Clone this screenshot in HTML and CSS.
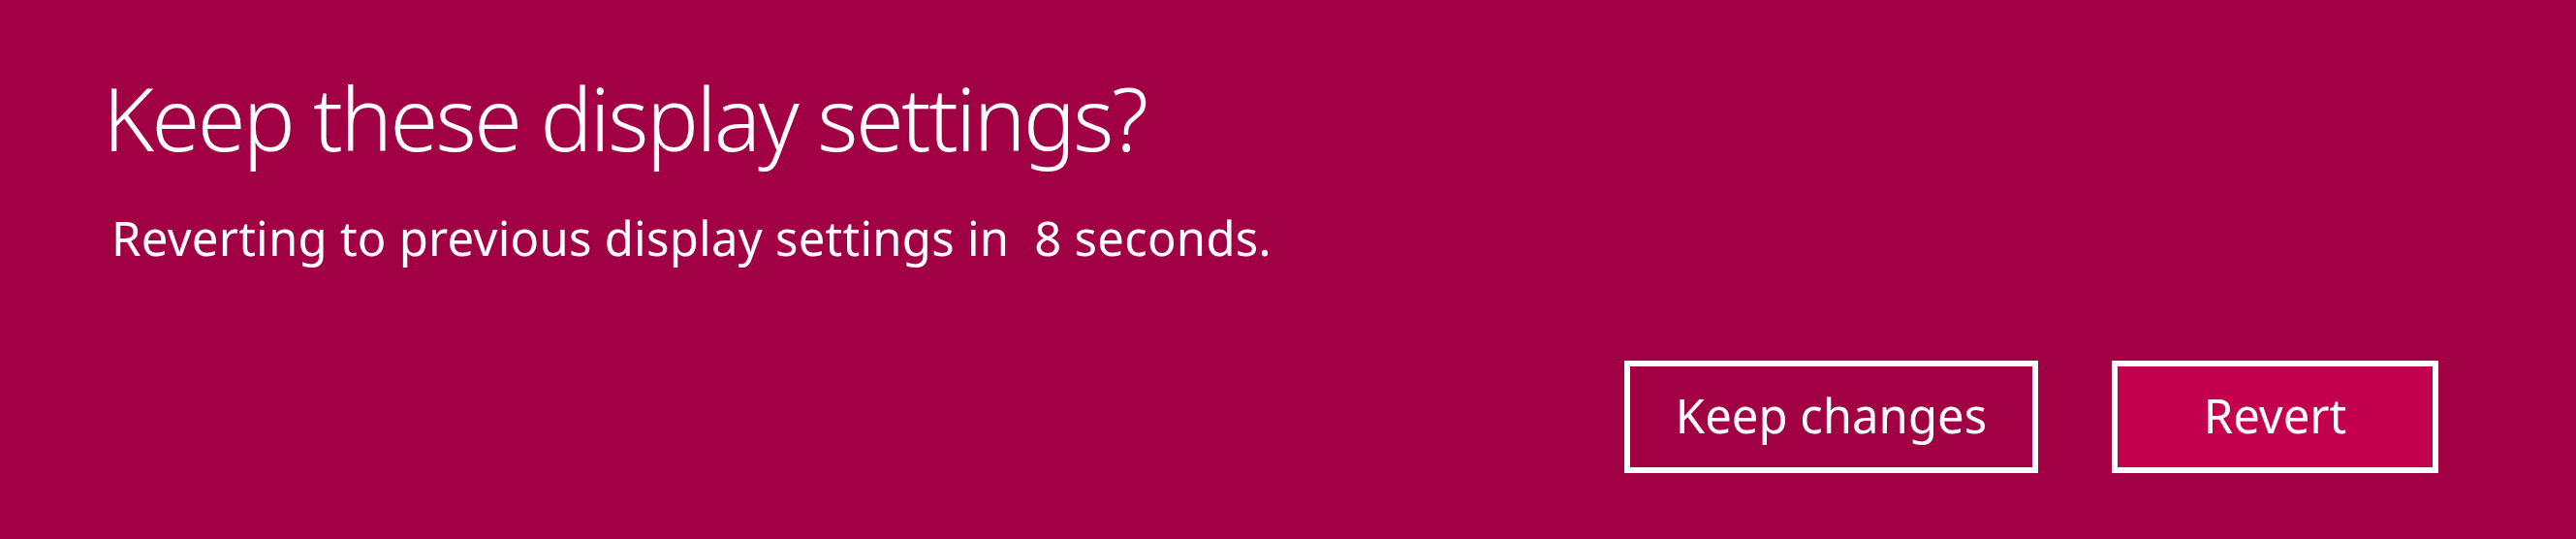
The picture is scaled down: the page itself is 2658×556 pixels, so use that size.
FILE: index.html
```html
<!DOCTYPE html>
<html lang="en">
<head>
<meta charset="utf-8">
<title>Keep these display settings?</title>
<link rel="stylesheet" href="styles.css">
</head>
<body>
<div class="dialog">
  <h1 class="title">Keep these display settings?</h1>
  <p class="message">Reverting to previous display settings in&nbsp; 8 seconds.</p>
  <div class="actions">
    <button class="btn btn-keep">Keep changes</button>
    <button class="btn btn-revert">Revert</button>
  </div>
</div>
</body>
</html>
```

FILE: styles.css
```css
html, body {
  margin: 0;
  padding: 0;
  background: #a10044;
  width: 2658px;
  height: 556px;
  overflow: hidden;
}

.dialog {
  box-sizing: border-box;
  width: 2658px;
  height: 556px;
  padding: 76px 142px 0 106px;
  display: flex;
  flex-direction: column;
  color: #ffffff;
  font-family: "Noto Sans", "Open Sans", sans-serif;
}

.title {
  margin: 0;
  font-size: 90px;
  line-height: 90px;
  font-weight: 300;
  letter-spacing: -2.5px;
}

.message {
  margin: 55px 0 0 9px;
  font-size: 49px;
  line-height: 49px;
  font-weight: 400;
  letter-spacing: 0.25px;
}

.actions {
  margin-top: 102px;
  display: flex;
  justify-content: flex-end;
  gap: 76px;
}

.btn {
  box-sizing: border-box;
  width: 427px;
  height: 116px;
  border: 6px solid #ffffff;
  color: #ffffff;
  font-family: "Noto Sans", "Open Sans", sans-serif;
  font-size: 49px;
  line-height: 49px;
  display: flex;
  align-items: center;
  justify-content: center;
  padding: 0 0 4px 0;
}

.btn-keep {
  background: #a10044;
}

.btn-revert {
  width: 337px;
  background: #c3004e;
}
```
